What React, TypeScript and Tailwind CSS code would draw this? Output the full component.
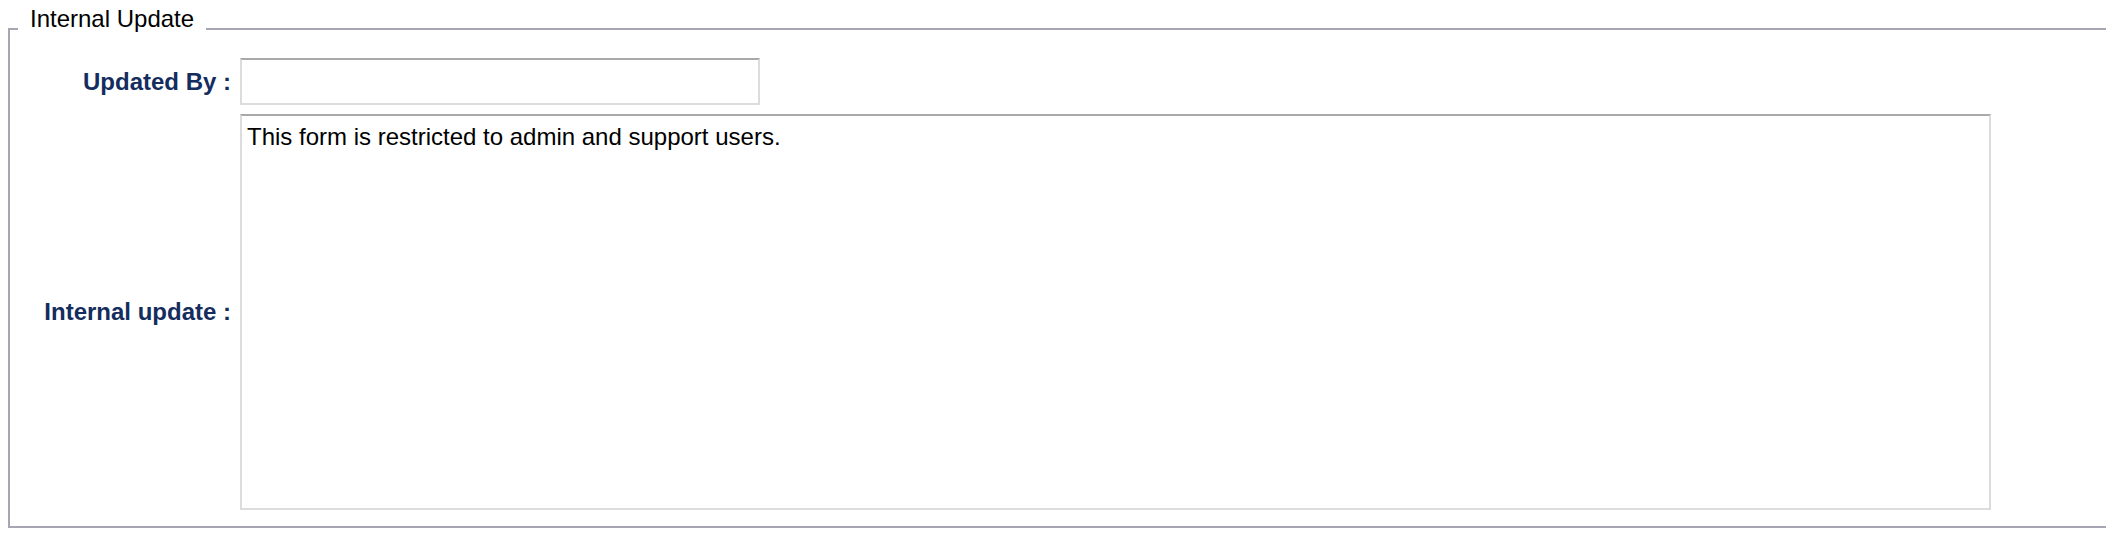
const InternalUpdate = () => {
  return (
    <div className="w-full overflow-hidden bg-white font-['Liberation_Sans',Arial,sans-serif]">
      <fieldset className="ml-2 w-[2140px] border-2 border-[#a6a6b2] pl-2 pr-0 pt-0 pb-4">
        <legend className="px-3 pt-[5px] pb-[25px] text-[24px] leading-[28px] text-black">
          Internal Update
        </legend>

        <div className="grid grid-cols-[213px_auto] gap-x-[9px] gap-y-[9px]">
          {/* UPDATED BY */}
          <label className="self-center text-right text-[24px] font-bold text-[#142d5e]">
            Updated By :
          </label>
          <input
            type="text"
            className="block h-[47px] w-[520px] border-2 border-[#dcdcdc] border-t-[#a9a9a9] bg-white px-[5px] text-[24px] outline-none"
          />

          {/* INTERNAL UPDATE */}
          <label className="self-center text-right text-[24px] font-bold text-[#142d5e]">
            Internal update :
          </label>
          <textarea
            defaultValue="This form is restricted to admin and support users."
            className="block h-[396px] w-[1751px] resize-none border-2 border-[#dcdcdc] border-t-[#a9a9a9] bg-white pl-[5px] pt-[7px] text-[24px] leading-[27.6px] text-black outline-none"
          />
        </div>
      </fieldset>
    </div>
  );
};

export default function App() {
  return <InternalUpdate />;
}
